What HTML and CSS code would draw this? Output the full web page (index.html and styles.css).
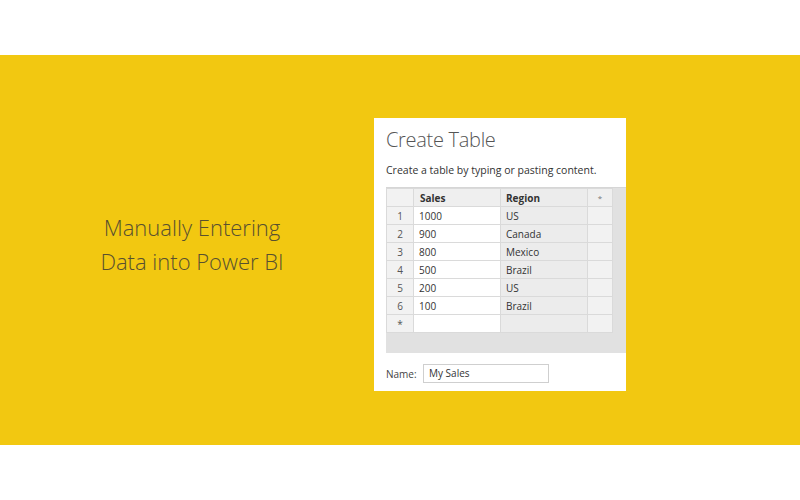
FILE: index.html
```html
<!DOCTYPE html>
<html>
<head>
<meta charset="utf-8">
<link rel="stylesheet" href="styles.css">
</head>
<body>
<div class="top"></div>
<div class="band">
  <div class="intro">
    <p>Manually Entering</p>
    <p>Data into Power BI</p>
  </div>
  <div class="dialog">
    <h1 class="title">Create Table</h1>
    <p class="sub">Create a table by typing or pasting content.</p>
    <div class="grid">
      <table>
        <thead>
          <tr><th class="num"></th><th class="c1">Sales</th><th class="c2">Region</th><th class="star">*</th></tr>
        </thead>
        <tbody>
          <tr><td class="num">1</td><td class="c1">1000</td><td class="c2">US</td><td class="star"></td></tr>
          <tr><td class="num">2</td><td class="c1">900</td><td class="c2">Canada</td><td class="star"></td></tr>
          <tr><td class="num">3</td><td class="c1">800</td><td class="c2">Mexico</td><td class="star"></td></tr>
          <tr><td class="num">4</td><td class="c1">500</td><td class="c2">Brazil</td><td class="star"></td></tr>
          <tr><td class="num">5</td><td class="c1">200</td><td class="c2">US</td><td class="star"></td></tr>
          <tr><td class="num">6</td><td class="c1">100</td><td class="c2">Brazil</td><td class="star"></td></tr>
          <tr><td class="num">*</td><td class="c1"></td><td class="c2"></td><td class="star"></td></tr>
        </tbody>
      </table>
    </div>
    <div class="name">
      <span class="label">Name:</span>
      <span class="input">My Sales</span>
    </div>
  </div>
</div>
</body>
</html>
```
FILE: styles.css
```css
* { box-sizing: border-box; }
html, body { margin: 0; padding: 0; background: #fff; }
body { font-family: "Open Sans", "Noto Sans", sans-serif; width: 800px; height: 500px; overflow: hidden; }
.top { height: 55px; }
.band {
  height: 390px;
  background: #f2c811;
  display: flex;
  align-items: flex-start;
  padding-top: 63px;
}
.intro {
  width: 374px;
  padding-left: 10px;
  padding-top: 92px;
  text-align: center;
  color: #585030;
  font-weight: 300;
  font-size: 22px;
  line-height: 34px;
}
.intro p { margin: 0; }
.dialog {
  width: 252px;
  height: 273px;
  background: #fff;
  padding-left: 12px;
  padding-top: 8px;
  display: flex;
  flex-direction: column;
}
.title {
  margin: 0;
  font-size: 20px;
  font-weight: 300;
  color: #555;
  line-height: 28px;
  letter-spacing: -0.3px;
}
.sub {
  margin: 9px 0 0;
  font-size: 10.5px;
  line-height: 14px;
  color: #333;
}
.grid {
  margin-top: 10px;
  width: 240px;
  height: 166px;
  background: #e1e1e1;
  border-top: 1px solid #d6d6d6;
}
table {
  border-collapse: collapse;
  table-layout: fixed;
  width: 226px;
  font-size: 10px;
  color: #333;
}
th, td {
  height: 18px;
  padding: 0 0 0 5px;
  border: 1px solid #dadada;
  text-align: left;
  white-space: nowrap;
}
th { background: #efefef; font-weight: 700; height: 18px; }
th.c1 { padding-left: 6px; }
td.num, th.num { width: 27px; background: #f2f2f2; text-align: center; padding: 0; color: #555; }
.c1 { width: 87px; background: #fff; }
th.c1 { background: #efefef; }
.c2 { width: 87px; background: #ececec; }
th.c2 { background: #ececec; }
.star { width: 25px; background: #f2f2f2; text-align: center; padding: 0; font-weight: 400; font-size: 8px; color: #777; }
th.star { background: #efefef; }
td.num { font-size: 10px; }
.name {
  margin-top: 11px;
  display: flex;
  align-items: center;
  font-size: 10px;
  color: #444;
}
.label { width: 37px; }
.input {
  width: 126px;
  height: 19px;
  border: 1px solid #cfcfcf;
  padding-left: 5px;
  line-height: 17px;
  color: #333;
}
```
